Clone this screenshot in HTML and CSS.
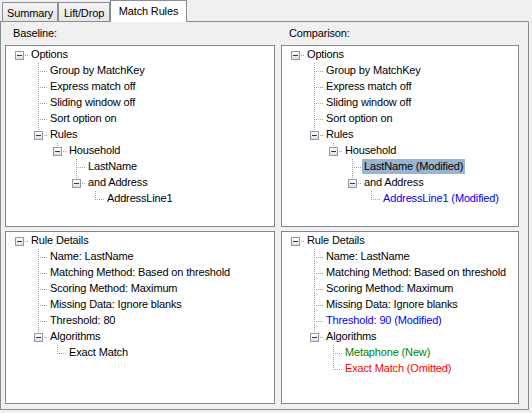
FILE: index.html
```html
<!DOCTYPE html>
<html>
<head>
<meta charset="utf-8">
<link rel="stylesheet" href="styles.css">
</head>
<body>
<div class="tabs">
  <div class="tab t-summary">Summary</div>
  <div class="tab t-lift">Lift/Drop</div>
  <div class="tab t-match active">Match Rules</div>
</div>
<div class="panel">
  <div class="col">
    <div class="caption">Baseline:</div>
    <div class="tree-box top">
      <ul class="tree">
        <li><div class="row"><span class="tog"></span><span class="label">Options</span></div>
          <ul>
            <li><div class="row"><span class="label">Group by MatchKey</span></div></li>
            <li><div class="row"><span class="label">Express match off</span></div></li>
            <li><div class="row"><span class="label">Sliding window off</span></div></li>
            <li><div class="row"><span class="label">Sort option on</span></div></li>
            <li><div class="row"><span class="tog"></span><span class="label">Rules</span></div>
              <ul>
                <li><div class="row"><span class="tog"></span><span class="label">Household</span></div>
                  <ul>
                    <li><div class="row"><span class="label">LastName</span></div></li>
                    <li><div class="row"><span class="tog"></span><span class="label">and Address</span></div>
                      <ul>
                        <li><div class="row"><span class="label">AddressLine1</span></div></li>
                      </ul>
                    </li>
                  </ul>
                </li>
              </ul>
            </li>
          </ul>
        </li>
      </ul>
    </div>
    <div class="tree-box bottom">
      <ul class="tree">
        <li><div class="row"><span class="tog"></span><span class="label">Rule Details</span></div>
          <ul>
            <li><div class="row"><span class="label">Name: LastName</span></div></li>
            <li><div class="row"><span class="label">Matching Method: Based on threshold</span></div></li>
            <li><div class="row"><span class="label">Scoring Method: Maximum</span></div></li>
            <li><div class="row"><span class="label">Missing Data: Ignore blanks</span></div></li>
            <li><div class="row"><span class="label">Threshold: 80</span></div></li>
            <li><div class="row"><span class="tog"></span><span class="label">Algorithms</span></div>
              <ul>
                <li><div class="row"><span class="label">Exact Match</span></div></li>
              </ul>
            </li>
          </ul>
        </li>
      </ul>
    </div>
  </div>
  <div class="col">
    <div class="caption">Comparison:</div>
    <div class="tree-box top">
      <ul class="tree">
        <li><div class="row"><span class="tog"></span><span class="label">Options</span></div>
          <ul>
            <li><div class="row"><span class="label">Group by MatchKey</span></div></li>
            <li><div class="row"><span class="label">Express match off</span></div></li>
            <li><div class="row"><span class="label">Sliding window off</span></div></li>
            <li><div class="row"><span class="label">Sort option on</span></div></li>
            <li><div class="row"><span class="tog"></span><span class="label">Rules</span></div>
              <ul>
                <li><div class="row"><span class="tog"></span><span class="label">Household</span></div>
                  <ul>
                    <li><div class="row"><span class="label sel">LastName (Modified)</span></div></li>
                    <li><div class="row"><span class="tog"></span><span class="label">and Address</span></div>
                      <ul>
                        <li><div class="row"><span class="label mod">AddressLine1 (Modified)</span></div></li>
                      </ul>
                    </li>
                  </ul>
                </li>
              </ul>
            </li>
          </ul>
        </li>
      </ul>
    </div>
    <div class="tree-box bottom">
      <ul class="tree">
        <li><div class="row"><span class="tog"></span><span class="label">Rule Details</span></div>
          <ul>
            <li><div class="row"><span class="label">Name: LastName</span></div></li>
            <li><div class="row"><span class="label">Matching Method: Based on threshold</span></div></li>
            <li><div class="row"><span class="label">Scoring Method: Maximum</span></div></li>
            <li><div class="row"><span class="label">Missing Data: Ignore blanks</span></div></li>
            <li><div class="row"><span class="label mod">Threshold: 90 (Modified)</span></div></li>
            <li><div class="row"><span class="tog"></span><span class="label">Algorithms</span></div>
              <ul>
                <li><div class="row"><span class="label new">Metaphone (New)</span></div></li>
                <li><div class="row"><span class="label del">Exact Match (Omitted)</span></div></li>
              </ul>
            </li>
          </ul>
        </li>
      </ul>
    </div>
  </div>
</div>
</body>
</html>
```

FILE: styles.css
```css
* { box-sizing: border-box; }

body {
  margin: 0;
  width: 532px;
  height: 413px;
  overflow: hidden;
  background: #f0f0f0;
  font-family: "Liberation Sans", Arial, sans-serif;
  font-size: 11px;
  letter-spacing: -0.15px;
  color: #000;
}

/* Tabs */
.tabs {
  display: flex;
  align-items: flex-end;
  height: 21px;
  padding-left: 2px;
  position: relative;
  z-index: 1;
}

.tab {
  height: 19px;
  border: 1px solid #898c95;
  border-bottom: none;
  background: linear-gradient(#f4f4f4, #e6e6e6);
  display: flex;
  align-items: center;
  justify-content: center;
  padding-top: 2px;
  white-space: nowrap;
}

.t-summary { width: 56px; }
.t-lift { width: 52px; }
.t-match { width: 77px; }

.tab.active {
  height: 22px;
  margin-bottom: -1px;
  background: #fff;
  padding-top: 0;
  padding-bottom: 1px;
}

/* Panel */
.panel {
  width: 529px;
  height: 389px;
  border: 1px solid #898c95;
  padding: 0 9px 5px 4px;
  display: grid;
  grid-template-columns: 270px 238px;
  column-gap: 6px;
}

.col {
  display: flex;
  flex-direction: column;
}

.caption {
  height: 23px;
  line-height: 23px;
  padding-left: 8px;
}

.tree-box {
  background: #fff;
  border: 1px solid #828790;
  padding-top: 1px;
  overflow: hidden;
}

.tree-box.top { height: 182px; }
.tree-box.bottom { height: 173px; margin-top: 4px; }

/* Tree */
.tree, .tree ul {
  list-style: none;
  margin: 0;
  padding: 0;
}

.tree ul { padding-left: 19px; }

.tree li { position: relative; }

.tree ul > li::before {
  content: "";
  position: absolute;
  left: 13px;
  top: 0;
  bottom: 0;
  width: 1px;
  background: repeating-linear-gradient(to bottom, #a0a0a0 0 1px, transparent 1px 2px);
}

.tree ul > li:last-child::before {
  bottom: auto;
  height: 8px;
}

.row {
  position: relative;
  height: 16px;
  line-height: 16px;
  padding-left: 23px;
  white-space: nowrap;
}

.row::after {
  content: "";
  position: absolute;
  left: 13px;
  top: 8px;
  width: 9px;
  height: 1px;
  background: repeating-linear-gradient(to right, #a0a0a0 0 1px, transparent 1px 2px);
}

.label {
  display: inline-block;
  height: 15px;
  line-height: 15px;
  padding: 0 2px;
  vertical-align: top;
}

.tog {
  position: absolute;
  left: 9px;
  top: 4px;
  width: 9px;
  height: 9px;
  border: 1px solid #8e9aaa;
  background: linear-gradient(#ffffff, #dcdfe4);
  z-index: 1;
}

.tog::after {
  content: "";
  position: absolute;
  left: 1px;
  top: 3px;
  width: 5px;
  height: 1px;
  background: #1e3c6c;
}

.sel { background: #99b4d1; }
.mod { color: #0000ff; }
.new { color: #008000; }
.del { color: #ff0000; }
```
